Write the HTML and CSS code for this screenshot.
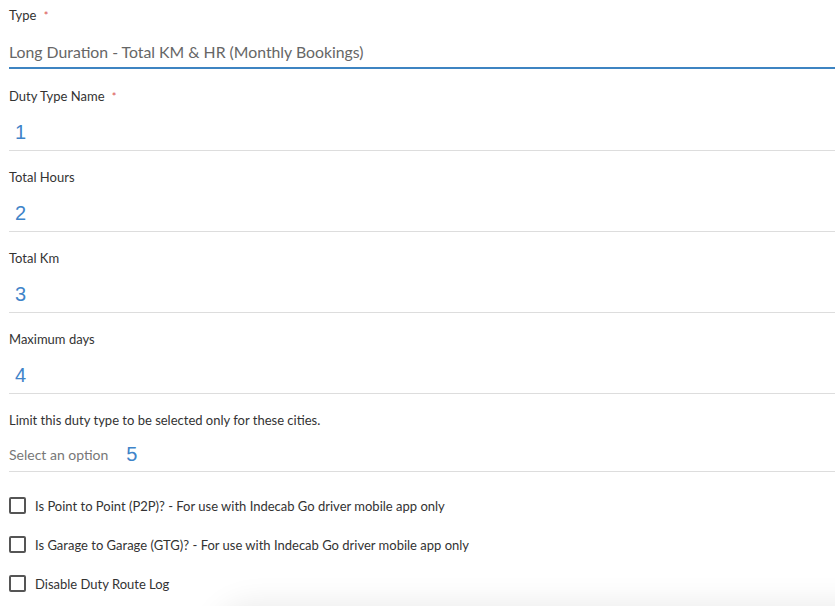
FILE: index.html
```html
<!DOCTYPE html>
<html>
<head>
<meta charset="utf-8">
<link rel="stylesheet" href="styles.css">
</head>
<body>
<form class="form">
  <div class="field field-first">
    <label class="label">Type <span class="req">*</span></label>
    <div class="input input-active">Long Duration - Total KM &amp; HR (Monthly Bookings)</div>
  </div>
  <div class="field">
    <label class="label">Duty Type Name <span class="req">*</span></label>
    <div class="input"><span class="num">1</span></div>
  </div>
  <div class="field">
    <label class="label">Total Hours</label>
    <div class="input"><span class="num">2</span></div>
  </div>
  <div class="field">
    <label class="label">Total Km</label>
    <div class="input"><span class="num">3</span></div>
  </div>
  <div class="field">
    <label class="label">Maximum days</label>
    <div class="input"><span class="num">4</span></div>
  </div>
  <div class="field">
    <label class="label">Limit this duty type to be selected only for these cities.</label>
    <div class="input select"><span class="placeholder">Select an option</span><span class="num num-inline">5</span></div>
  </div>
  <div class="checks">
    <label class="check"><span class="box"></span>Is Point to Point (P2P)? - For use with Indecab Go driver mobile app only</label>
    <label class="check"><span class="box"></span>Is Garage to Garage (GTG)? - For use with Indecab Go driver mobile app only</label>
    <label class="check"><span class="box"></span>Disable Duty Route Log</label>
  </div>
</form>
<div class="footer-shadow"></div>
</body>
</html>
```
FILE: styles.css
```css
html, body {
  margin: 0;
  padding: 0;
  background: #fff;
  overflow: hidden;
}
body {
  font-family: Lato, "Open Sans", sans-serif;
  color: #333;
}
.form {
  padding-left: 9px;
  padding-top: 7px;
}
.field {
  display: flex;
  flex-direction: column;
  padding-top: 18px;
}
.field-first {
  padding-top: 0;
  margin-bottom: 1px;
}
.label {
  display: block;
  font-size: 13px;
  line-height: 16px;
  height: 16px;
  color: #333;
}
.req {
  color: #d9534f;
  font-size: 11px;
  margin-left: 4px;
  vertical-align: 0;
}
.input {
  margin-top: 11px;
  height: 35px;
  display: flex;
  align-items: center;
  border-bottom: 1px solid #ddd;
}
.input-active {
  height: 32px;
  border-bottom: 2px solid #3d84c2;
  font-size: 15.8px;
  color: #666;
  padding-top: 1px;
}
.select {
  margin-top: 10px;
  height: 33px;
}
.num {
  font-family: "Liberation Sans", Arial, sans-serif;
  font-size: 20px;
  color: #3f84c9;
  padding-left: 6px;
}
.num-inline {
  padding-left: 18px;
  padding-bottom: 1px;
}
.placeholder {
  font-size: 14px;
  color: #777;
}
.checks {
  padding-top: 14px;
  display: flex;
  flex-direction: column;
}
.check {
  display: flex;
  align-items: center;
  height: 39px;
  font-size: 13px;
  color: #333;
}
.box {
  box-sizing: border-box;
  width: 17px;
  height: 17px;
  border: 2px solid #555;
  border-radius: 2px;
  margin-right: 9px;
  flex: none;
}
.footer-shadow {
  position: fixed;
  left: 215px;
  right: -60px;
  bottom: -60px;
  height: 60px;
  border-radius: 40px 0 0 0;
  box-shadow: 0 0 30px 4px rgba(0, 0, 0, 0.08);
  background: #fff;
}
```
